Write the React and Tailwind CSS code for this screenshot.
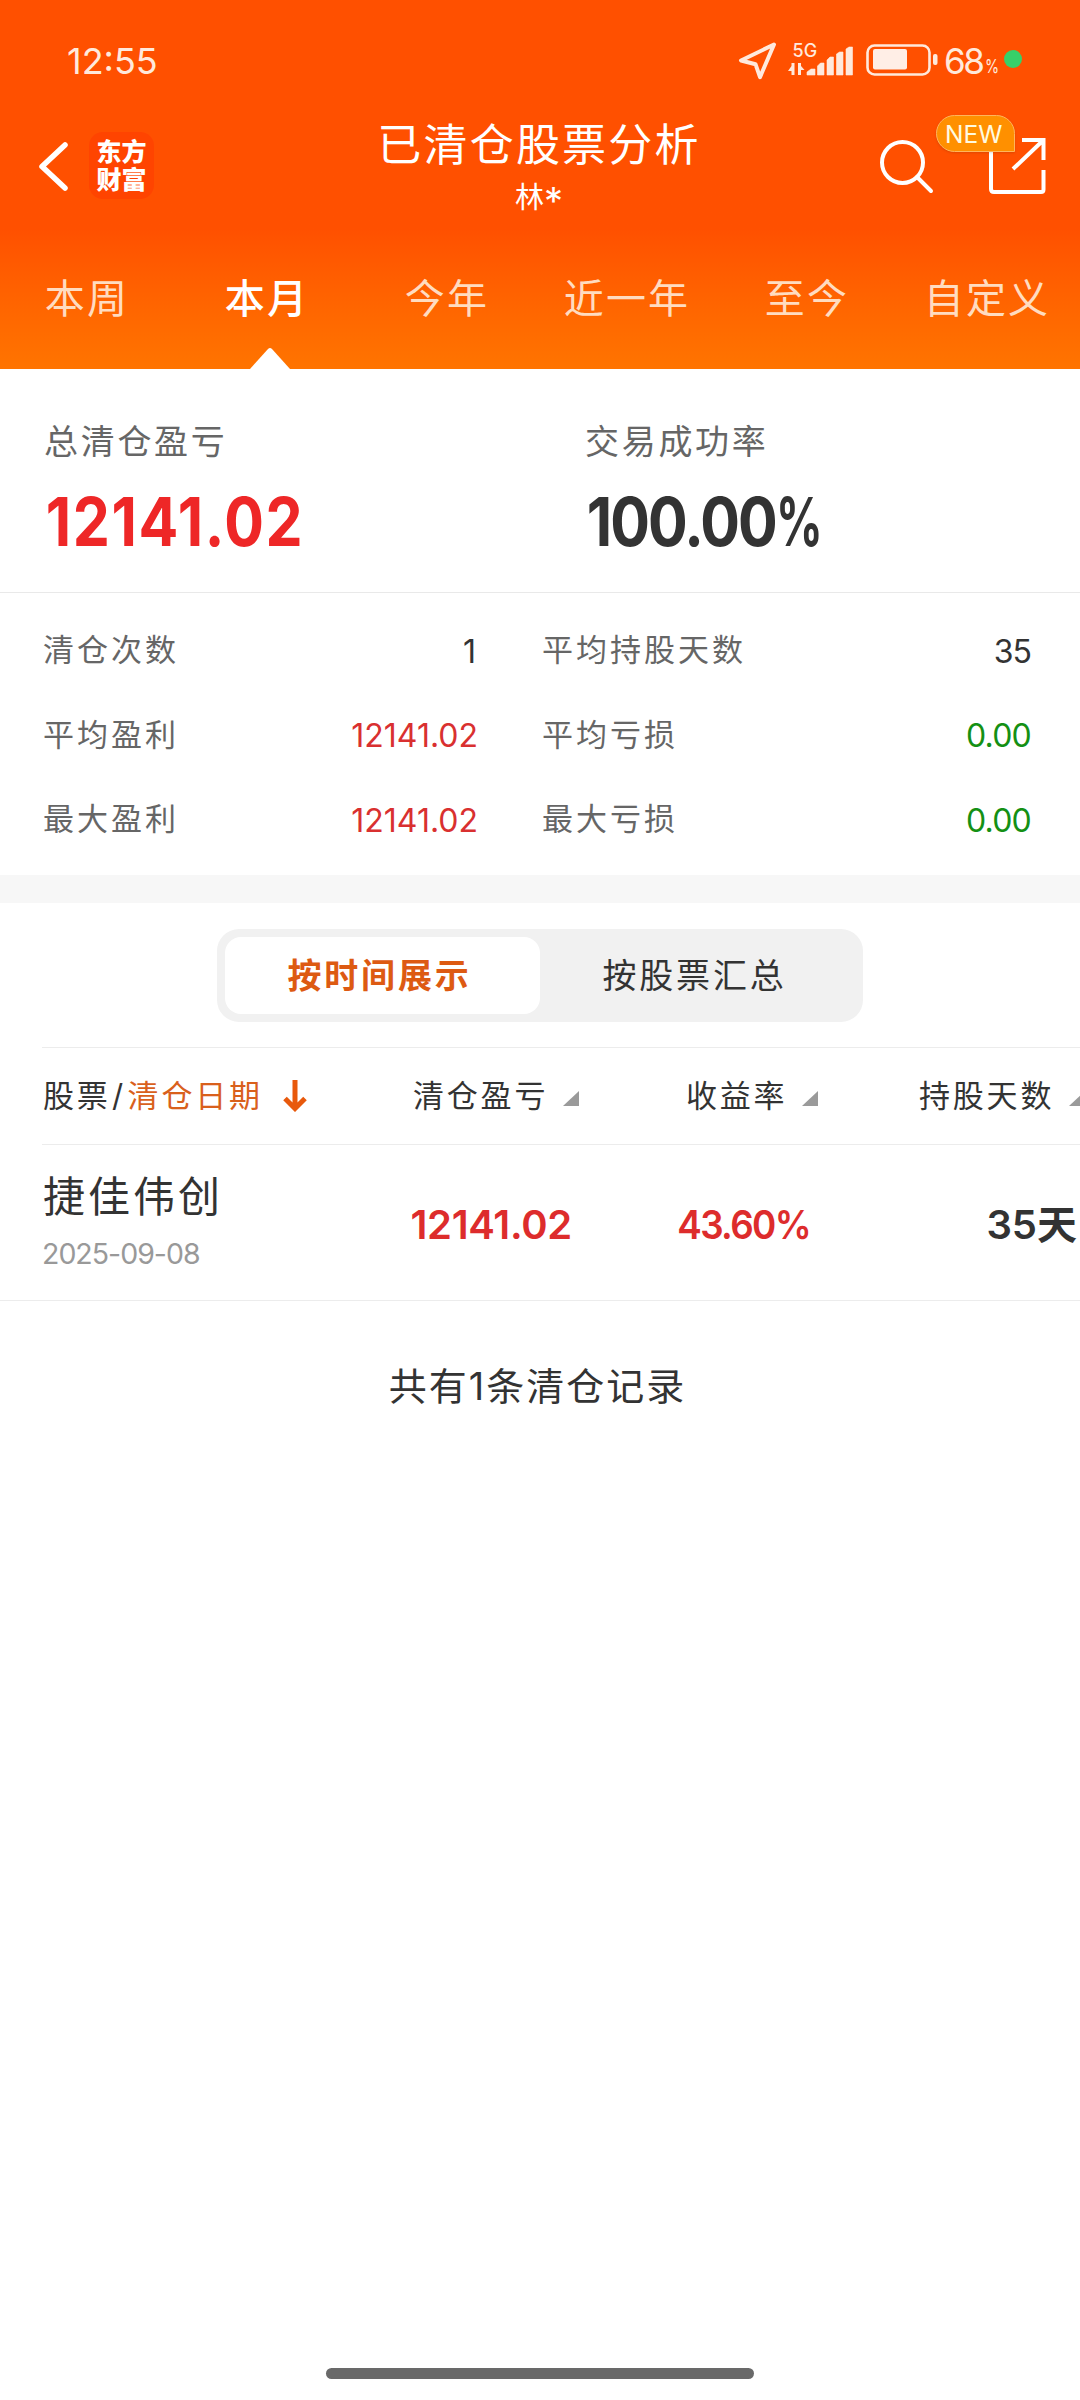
import { useState } from 'react';

const tabs = ['本周', '本月', '今年', '近一年', '至今', '自定义'];

const stats = [
  { label: '清仓次数', value: '1', style: 'text-[#333333] pr-[2px]' },
  { label: '平均持股天数', value: '35', style: 'text-[#333333] tracking-[-1px]' },
  { label: '平均盈利', value: '12141.02', style: 'text-[#d93030]' },
  { label: '平均亏损', value: '0.00', style: 'text-[#149014] tracking-[-0.8px]' },
  { label: '最大盈利', value: '12141.02', style: 'text-[#d93030]' },
  { label: '最大亏损', value: '0.00', style: 'text-[#149014] tracking-[-0.8px]' },
];

const records = [
  { name: '捷佳伟创', date: '2025-09-08', profit: '12141.02', rate: '43.60%', days: '35天' },
];

function StatusBar() {
  return (
    <div className="flex h-[105px] justify-between pt-[38px] pl-[67px] pr-[58px] text-[#ffe9dc]">
      <div className="pt-[4px] text-[36px] leading-[39px]">12:55</div>
      <div className="flex h-[42px]">
        <svg width="206" height="42" viewBox="738 38 206 42" fill="none" className="overflow-visible">
          <path d="M774 44.5 741 60.5l14.5 3.7 4.5 13z" stroke="currentColor" strokeWidth="4" strokeLinejoin="round" />
          <text x="792.500" y="56.500" fontSize="18" fontWeight="500" fill="currentColor">5G</text>
          <path d="M794.500 63v12h-3v-4h-3.500l3.500-5v-3zM798 75V63h3v3l3.500 4H801v5z" fill="currentColor" />
          <path d="M807 75v-3l4-3h4v6zM817.500 75v-9l3-3h3.500v12zM827 75V60l3-3h3.500v18zM836.500 75V54l3-2h3.500v23zM846 75V49l3-2h3.500v28z" fill="currentColor" stroke="currentColor" strokeWidth="0.6" strokeLinejoin="round" />
          <rect x="867.5" y="45.5" width="62" height="29" rx="7" stroke="currentColor" strokeWidth="2.6" />
          <rect x="873" y="49" width="34" height="20.5" rx="2" fill="#ffeee6" />
          <rect x="933" y="54" width="4.5" height="11" rx="2" fill="currentColor" />
        </svg>
        <span className="w-[41px] pt-[4px] text-[35px] leading-[39px] tracking-[-2.5px]">68</span>
        <span className="w-[19px] origin-left scale-x-[0.8] pt-[16px] text-[18px] leading-[26px]">%</span>
        <span className="mt-[12px] h-[18px] w-[18px] rounded-full bg-[#37d069]" />
      </div>
    </div>
  );
}

function TitleBar() {
  return (
    <div className="flex h-[123px] justify-between pl-[37px] pr-[33px]">
      <div className="flex w-[320px]">
        <svg className="mt-[35px]" width="32" height="54" viewBox="0 0 32 54" fill="none">
          <path d="M28 5 5 26.5 28 48" stroke="#fff" strokeWidth="5.5" strokeLinecap="round" strokeLinejoin="round" />
        </svg>
        <div className="mt-[27px] h-[67px] w-[65px] ml-[20px] rounded-[14px] bg-[#ff4400] pt-[6px] text-center text-[25px] leading-[28px] font-black text-white">
          <div>东方</div>
          <div>财富</div>
        </div>
      </div>
      <div className="flex flex-col items-center pt-[15px] pr-[6px] text-white">
        <h1 className="text-[44px] leading-[50px] tracking-[2.2px] whitespace-nowrap">已清仓股票分析</h1>
        <div className="mt-[10px] flex text-[29px] leading-[36px]">
          林<span className="text-[38px] leading-[42px]">*</span>
        </div>
      </div>
      <div className="relative flex w-[320px] justify-end">
        <svg width="170" height="60" viewBox="877 136 170 60" fill="none" stroke="#fff" strokeWidth="4" className="mt-[31px]">
          <circle cx="902.5" cy="162.5" r="20.5" />
          <path d="m917 177 14 14" strokeLinecap="round" />
          <path d="M991 145v44q0 3 3 3h47q2.500 0 2.500-2.500V170M1022 140h21.500v20M1043 140.500 1013 169" />
        </svg>
        <div className="absolute top-[10px] right-[32px] h-[37px] w-[79px] rounded-[19px] rounded-br-none border border-[#ffb55c] bg-[#ff9000] pl-[8px] text-[24.5px] leading-[37px] text-[#fffbe0] shadow-sm">
          NEW
        </div>
      </div>
    </div>
  );
}

function SortMark() {
  return (
    <svg width="16" height="15" viewBox="0 0 16 15" className="shrink-0">
      <path d="M16 0v15H0z" fill="#9a9a9a" />
    </svg>
  );
}

export default function App() {
  const [activeTab, setActiveTab] = useState('本月');
  const [view, setView] = useState('time');

  return (
    <div className="flex h-[2400px] w-[1080px] flex-col overflow-hidden bg-white font-['Inter','Noto_Sans_CJK_SC',sans-serif] text-[#333333]">
      <header className="h-[369px] bg-linear-to-b from-[#ff5000] from-62% to-[#ff7400]">
        <StatusBar />
        <TitleBar />
        <nav className="flex h-[141px]">
          {tabs.map((tab) => (
            <button
              key={tab}
              onClick={() => setActiveTab(tab)}
              className={`relative flex-1 pr-[6px] text-[40px] tracking-[2.2px] ${activeTab === tab ? 'font-medium text-white' : 'text-[#ffdcc0]'}`}
            >
              {tab}
              {activeTab === tab && (
                <svg className="absolute bottom-0 left-[70px]" width="40" height="22" viewBox="0 0 40 22">
                  <path d="M0 22 18 2q2-2 4 0l18 20z" fill="#fff" />
                </svg>
              )}
            </button>
          ))}
        </nav>
      </header>

      <section className="flex h-[224px] border-b border-[#e9e9e9] pt-[51px]">
        <div className="w-[541px] pl-[44px]">
          <div className="text-[34px] leading-[44px] tracking-[2.7px] text-[#666666]">总清仓盈亏</div>
          <div className="mt-[24px] origin-left scale-x-[0.88] pl-[2px] text-[67px] leading-[68px] font-bold tracking-[1.8px] text-[#ee2727]">12141.02</div>
        </div>
        <div className="pl-[44px]">
          <div className="text-[34px] leading-[44px] tracking-[2.7px] text-[#666666]">交易成功率</div>
          <div className="mt-[24px] flex origin-left scale-x-[0.88] pl-[2px] text-[67px] leading-[68px] font-bold tracking-[-2.2px]">
            100.00<span className="origin-left scale-x-[0.78]">%</span>
          </div>
        </div>
      </section>

      <section className="grid h-[282px] grid-cols-[435px_489px] content-start gap-x-[64px] pt-[15px] pl-[43px]">
        {stats.map((item) => (
          <div key={item.label} className="flex h-[84.5px] items-center justify-between">
            <span className="text-[31px] tracking-[3px] text-[#666666]">{item.label}</span>
            <span className={`pt-[3px] text-[32px] ${item.style}`}>{item.value}</span>
          </div>
        ))}
      </section>

      <div className="h-[28px] bg-[#f7f7f7]" />

      <div className="mx-auto mt-[26px] flex h-[93px] w-[646px] rounded-[22px] bg-[#f1f1f1] p-[8px] text-[34px] tracking-[2.8px]">
        <button
          onClick={() => setView('time')}
          className={`flex-1 rounded-[16px] pr-[6px] ${view === 'time' ? 'bg-white font-bold text-[#dd5a12]' : ''}`}
        >
          按时间展示
        </button>
        <button
          onClick={() => setView('stock')}
          className={`flex-1 rounded-[16px] pr-[6px] ${view === 'stock' ? 'bg-white font-bold text-[#dd5a12]' : ''}`}
        >
          按股票汇总
        </button>
      </div>

      <div className="mt-[25px] ml-[42px] flex h-[98px] items-center border-y border-[#ececec] text-[31px] tracking-[2.8px] whitespace-nowrap">
        <div className="flex w-[371px] shrink-0 items-center pl-[1px]">
          <span>股票</span>
          <span className="px-[1.500px]">/</span>
          <span className="text-[#d9601c]">清仓日期</span>
          <svg className="ml-[20px]" width="24" height="32" viewBox="0 0 24 32" fill="none" stroke="#e8590c" strokeWidth="5">
            <path d="M12 0v28M2 18.500l10 10 10-10" />
          </svg>
        </div>
        <div className="flex w-[273px] shrink-0 items-center gap-[15px]">清仓盈亏<div className="pt-[5px]"><SortMark /></div></div>
        <div className="flex w-[233px] shrink-0 items-center gap-[15px]">收益率<div className="pt-[5px]"><SortMark /></div></div>
        <div className="flex shrink-0 items-center gap-[15px]">持股天数<div className="pt-[5px]"><SortMark /></div></div>
      </div>

      {records.map((row) => (
        <div key={row.name} className="flex h-[156px] items-center border-b border-[#ececec] pl-[42px]">
          <div className="w-[328px]">
            <div className="pl-[1px] text-[42px] leading-[50px] tracking-[3px]">{row.name}</div>
            <div className="mt-[14px] mb-[2px] text-[28.5px] leading-[36px] tracking-[-1px] text-[#999999]">{row.date}</div>
          </div>
          <div className="w-[202px] pt-[5px] text-right text-[40px] font-semibold tracking-[-0.3px] text-[#dd2c2c]">{row.profit}</div>
          <div className="w-[238px] origin-right scale-x-[0.92] pt-[5px] text-right text-[40px] font-semibold tracking-[-1.8px] text-[#dd2c2c]">{row.rate}</div>
          <div className="w-[267px] pt-[5px] text-right text-[40px] font-semibold whitespace-nowrap">{row.days}</div>
        </div>
      ))}

      <div className="mt-[60px] pr-[5px] text-center text-[38px] leading-[50px] tracking-[2px]">共有1条清仓记录</div>

      <div className="mx-auto mt-auto mb-[21px] h-[11px] w-[428px] shrink-0 rounded-full bg-[#696969]" />
    </div>
  );
}
